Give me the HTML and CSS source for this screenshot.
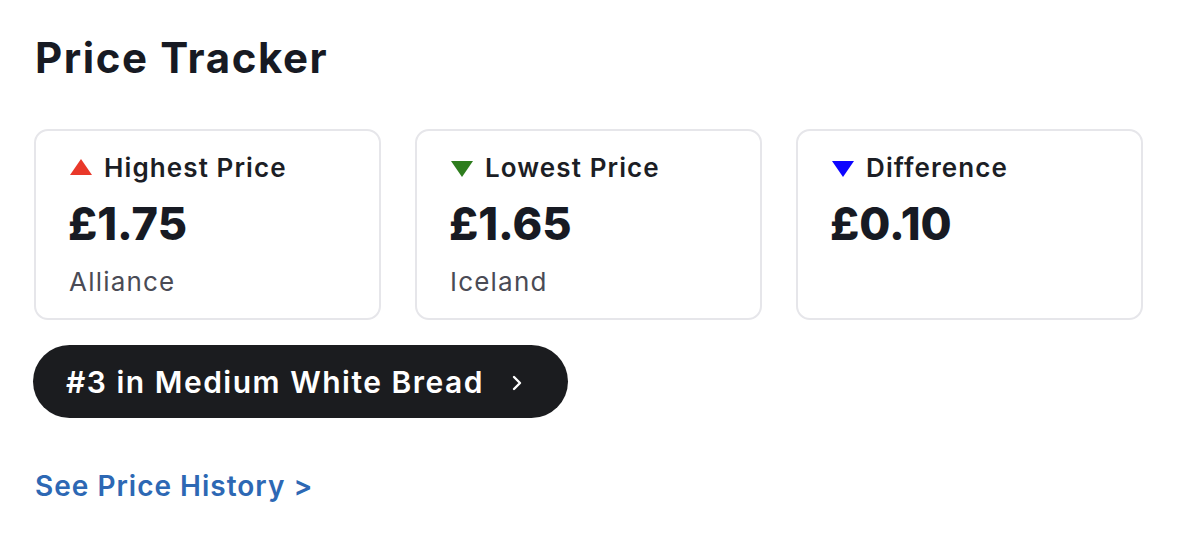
FILE: index.html
```html
<!DOCTYPE html>
<html lang="en">
<head>
<meta charset="utf-8">
<title>Price Tracker</title>
<link rel="stylesheet" href="styles.css">
</head>
<body>
<main class="tracker">
  <h1 class="title">Price Tracker</h1>
  <section class="cards">
    <div class="card">
      <div class="label"><span class="tri tri-up"></span>Highest Price</div>
      <div class="price">£1.75</div>
      <div class="store">Alliance</div>
    </div>
    <div class="card">
      <div class="label"><span class="tri tri-down green"></span>Lowest Price</div>
      <div class="price">£1.65</div>
      <div class="store">Iceland</div>
    </div>
    <div class="card">
      <div class="label"><span class="tri tri-down blue"></span>Difference</div>
      <div class="price">£0.10</div>
    </div>
  </section>
  <a class="rank" href="#">#3 in Medium White Bread
    <svg class="chev" width="14" height="18" viewBox="0 0 14 18"><path d="M4 3 L10 9 L4 15" fill="none" stroke="#fff" stroke-width="2.4" stroke-linecap="round" stroke-linejoin="round"/></svg>
  </a>
  <a class="history" href="#">See Price History &gt;</a>
</main>
</body>
</html>
```
FILE: styles.css
```css
* { box-sizing: border-box; }
html, body { margin: 0; background: #fff; }
body {
  font-family: "Inter", "Noto Sans", sans-serif;
  color: #171a23;
}
.tracker {
  padding: 26px 36px 0 34px;
  display: flex;
  flex-direction: column;
  align-items: flex-start;
}
.title {
  margin: 0 0 0 1px;
  font-size: 42px;
  font-weight: 700;
  line-height: 64px;
  letter-spacing: 1.6px;
}
.cards {
  margin-top: 39px;
  display: grid;
  grid-template-columns: repeat(3, 347px);
  gap: 34px;
}
.card {
  height: 191px;
  border: 2px solid #e6e6ea;
  border-radius: 14px;
  padding: 19px 32px 0 34px;
}
.label {
  display: flex;
  align-items: center;
  font-size: 26px;
  font-weight: 600;
  line-height: 36px;
  letter-spacing: 1.1px;
  color: #1c1e25;
}
.tri {
  width: 0; height: 0;
  margin-right: 12px;
  border-left: 11px solid transparent;
  border-right: 11px solid transparent;
}
.tri-up { border-bottom: 16px solid #e9382a; margin-top: -2px; }
.tri-down { border-top: 16px solid; margin-top: 2px; }
.green { border-top-color: #2e7d1e; }
.blue { border-top-color: #0d05ff; }
.price {
  margin-top: 10px;
  margin-left: -2px;
  font-size: 45px;
  font-weight: 800;
  line-height: 56px;
  color: #171a23;
}
.store {
  margin-top: 12px;
  margin-left: -1px;
  font-size: 26px;
  line-height: 36px;
  letter-spacing: 1.2px;
  color: #4a4b55;
}
.rank {
  margin-top: 25px;
  margin-left: -1px;
  height: 73px;
  padding: 0 44px 0 33px;
  border-radius: 37px;
  background: #1b1c1f;
  color: #fff;
  text-decoration: none;
  display: flex;
  align-items: center;
  gap: 26px;
  font-size: 30px;
  font-weight: 600;
  letter-spacing: 1.5px;
}
.chev { margin-top: 2px; }
.history {
  margin-top: 50px;
  margin-left: 1px;
  font-size: 28px;
  font-weight: 600;
  color: #2d68b4;
  text-decoration: none;
  line-height: 36px;
  letter-spacing: 1px;
}
```
